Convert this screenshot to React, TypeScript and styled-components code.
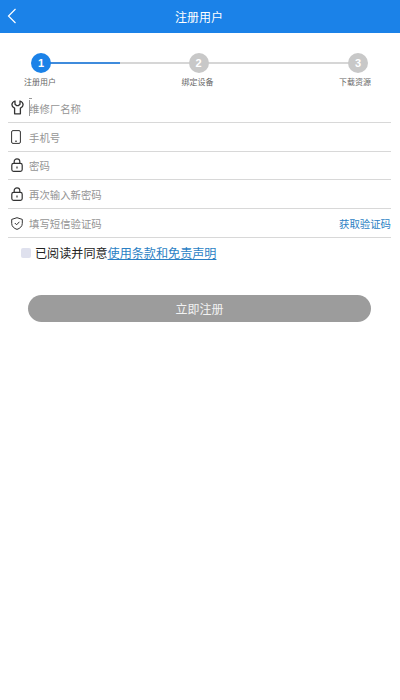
import styled, { createGlobalStyle } from "styled-components";

const GlobalStyle = createGlobalStyle`
  html, body {
    margin: 0;
    padding: 0;
    background: #fff;
    font-family: "Noto Sans CJK SC", "Liberation Sans", sans-serif;
  }
  * { box-sizing: border-box; }
`;

const steps = [
  { n: 1, label: "注册用户", active: true, shift: 1 },
  { n: 2, label: "绑定设备", active: false, shift: 1 },
  { n: 3, label: "下载资源", active: false, shift: 3 },
];

const IconWrench = () => (
  <svg width="13" height="15" viewBox="0 0 13 15" fill="none" stroke="#333" strokeWidth="1.3" strokeLinejoin="round">
    <path d="M4 1 V4.2 L5.5 5.6 H7.5 L9 4.2 V1 C11 1.7 12.1 3.2 12.1 4.8 C12.1 6.4 11 7.5 9.4 8.2 V13.8 H3.6 V8.2 C2 7.5 0.9 6.4 0.9 4.8 C0.9 3.2 2 1.7 4 1 Z" />
  </svg>
);

const IconPhone = () => (
  <svg width="10" height="14" viewBox="0 0 10 14" fill="none" stroke="#333" strokeWidth="1">
    <rect x="0.6" y="0.6" width="8.8" height="12.8" rx="1.4" />
    <path d="M4 11.2 H6" />
  </svg>
);

const IconLock = () => (
  <svg width="12" height="14" viewBox="0 0 12 14" fill="none" stroke="#333" strokeWidth="1.2">
    <rect x="0.8" y="5.4" width="10.4" height="8" rx="1.8" />
    <path d="M3.2 5.4 V3.6 C3.2 2 4.4 0.8 6 0.8 C7.6 0.8 8.8 2 8.8 3.6 V5.4" />
    <path d="M6 8.4 V10.4" />
  </svg>
);

const IconShield = () => (
  <svg width="12" height="13" viewBox="0 0 12 13" fill="none" stroke="#333" strokeWidth="1" strokeLinejoin="round">
    <path d="M6 0.7 L11.3 2.4 V6.4 C11.3 9.4 9 11.4 6 12.4 C3 11.4 0.7 9.4 0.7 6.4 V2.4 Z" />
    <path d="M3.8 6 L5.6 7.8 L8.4 4.8" />
  </svg>
);

const App = () => {
  return (
    <Page>
      <GlobalStyle />
      <Header>
        <BackIcon width="10" height="16" viewBox="0 0 10 16" fill="none" stroke="#fff" strokeWidth="1.2">
          <path d="M8.5 1 L1.5 8 L8.5 15" />
        </BackIcon>
        <Title>注册用户</Title>
      </Header>

      <Stepper>
        <Track>
          <TrackFill />
        </Track>
        {steps.map((s) => (
          <Step key={s.n}>
            <Circle $active={s.active} $shift={s.shift}>{s.n}</Circle>
            <StepLabel>{s.label}</StepLabel>
          </Step>
        ))}
      </Stepper>

      <Form>
        <Row>
          <IconBox><IconWrench /></IconBox>
          <Hint>
            <Caret />
            维修厂名称
          </Hint>
        </Row>
        <Row>
          <IconBox><IconPhone /></IconBox>
          <Hint>手机号</Hint>
        </Row>
        <Row>
          <IconBox><IconLock /></IconBox>
          <Hint>密码</Hint>
        </Row>
        <Row>
          <IconBox><IconLock /></IconBox>
          <Hint>再次输入新密码</Hint>
        </Row>
        <Row>
          <IconBox><IconShield /></IconBox>
          <Hint>填写短信验证码</Hint>
          <GetCode>获取验证码</GetCode>
        </Row>
      </Form>

      <Agree>
        <Check />
        <AgreeText>已阅读并同意</AgreeText>
        <AgreeLink>使用条款和免责声明</AgreeLink>
      </Agree>

      <Submit>立即注册</Submit>
    </Page>
  );
};

export default App;

const Page = styled.div`
  width: 400px;
  height: 700px;
  background: #fff;
  overflow: hidden;
`;

const Header = styled.div`
  height: 33px;
  padding-right: 2px;
  background: #1b82e8;
  display: flex;
  align-items: center;
  justify-content: center;
  position: relative;
`;

const BackIcon = styled.svg`
  position: absolute;
  left: 7px;
  top: 8px;
`;

const Title = styled.div`
  color: #fff;
  font-size: 12px;
  line-height: 33px;
`;

const Stepper = styled.div`
  position: relative;
  height: 61px;
  padding: 20px 29px 0 24px;
  display: flex;
  justify-content: space-between;
  align-items: flex-start;
`;

const Track = styled.div`
  position: absolute;
  left: 41px;
  right: 42px;
  top: 29px;
  height: 2px;
  background: #d6d6d6;
`;

const TrackFill = styled.div`
  width: 79px;
  height: 2px;
  background: #3f8bdc;
`;

const Step = styled.div`
  position: relative;
  width: 32px;
  display: flex;
  flex-direction: column;
  align-items: center;
`;

const Circle = styled.div<{ $active: boolean; $shift: number }>`
  width: 20px;
  height: 20px;
  margin-left: ${(p) => p.$shift * 2}px;
  border-radius: 50%;
  background: ${(p) => (p.$active ? "#1b82e8" : "#c8c8c8")};
  color: #fff;
  font-family: "Liberation Sans", sans-serif;
  font-size: 11px;
  font-weight: 700;
  line-height: 20px;
  text-align: center;
`;

const StepLabel = styled.div`
  margin-top: 3px;
  font-size: 8px;
  line-height: 12px;
  color: #666;
  white-space: nowrap;
`;

const Form = styled.div`
  margin: 0 9px 0 8px;
`;

const Row = styled.div`
  height: 28.8px;
  display: flex;
  align-items: center;
  border-bottom: 1px solid #d8d8d8;
`;

const IconBox = styled.div`
  width: 20px;
  padding-left: 3px;
  display: flex;
  align-items: center;
  flex-shrink: 0;
`;

const Hint = styled.div`
  flex: 1;
  position: relative;
  padding: 1px 0 0 1px;
  font-size: 10.4px;
  color: #959595;
`;

const Caret = styled.span`
  position: absolute;
  left: 1px;
  top: 0;
  bottom: 0;
  width: 1px;
  background: #999;

  &::before {
    content: "";
    position: absolute;
    left: 0;
    top: -2px;
    width: 3px;
    height: 1px;
    background: #999;
  }
`;

const GetCode = styled.div`
  padding-top: 1px;
  font-size: 10.4px;
  color: #2b7fc4;
`;

const Agree = styled.div`
  height: 30px;
  padding-left: 21px;
  display: flex;
  align-items: center;
`;

const Check = styled.span`
  width: 10px;
  height: 10px;
  margin-right: 4px;
  border-radius: 2px;
  background: #dfe1ee;
`;

const AgreeText = styled.span`
  font-size: 12.1px;
  color: #222;
`;

const AgreeLink = styled.span`
  font-size: 12.1px;
  color: #2b7fc4;
  text-decoration: underline;
`;

const Submit = styled.div`
  width: 343px;
  height: 27px;
  margin: 27px 0 0 28px;
  border-radius: 14px;
  background: #9c9c9c;
  color: #f2f2f2;
  font-size: 12px;
  line-height: 27px;
  text-align: center;
`;
